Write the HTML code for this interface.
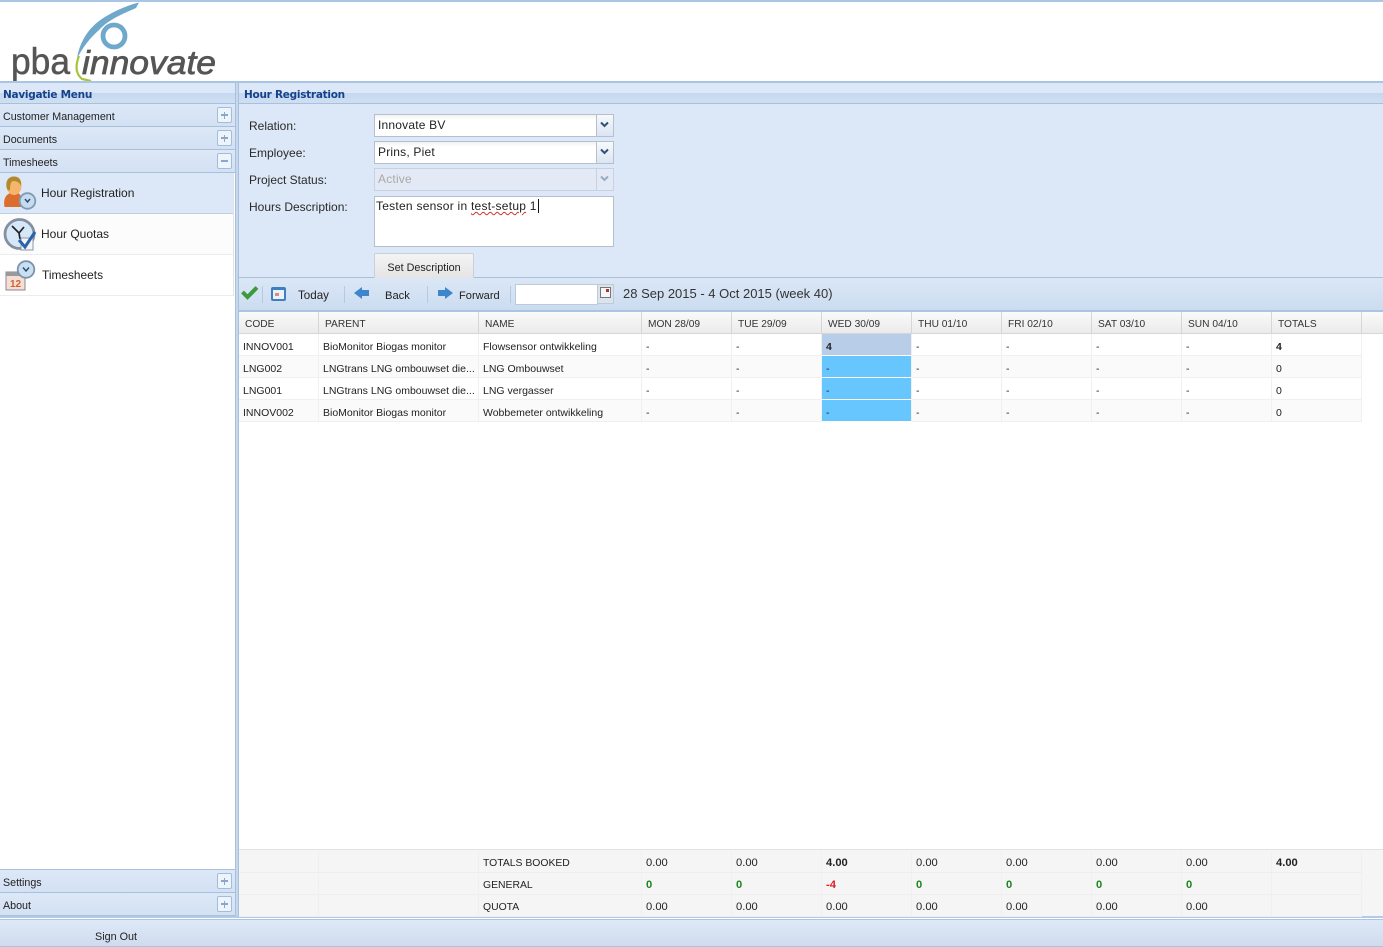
<!DOCTYPE html>
<html><head><meta charset="utf-8"><title>Hour Registration</title>
<style>
html,body{margin:0;padding:0;width:1383px;height:947px;overflow:hidden;background:#fff}
body{position:relative;font-family:"Liberation Sans",sans-serif;font-size:11px;color:#222}
.a{position:absolute}
.t{position:absolute;white-space:nowrap;line-height:14px}
.hd{background:linear-gradient(#dce8f7 0,#dce8f7 50%,#c5d8ef 50%,#cfdff3 100%);font-weight:bold;color:#15428b;font-family:"DejaVu Sans",sans-serif;font-size:10.5px;letter-spacing:-.27px}
.acc{position:absolute;left:0;width:235px;height:22px;background:linear-gradient(#dde8f7,#d3e1f4);border-bottom:1px solid #a9c0db;font-size:10.7px;line-height:26px;text-indent:3px;color:#222}
.pm{position:absolute;left:217px;top:3px;width:13px;height:14px;background:#eef4fc;border:1px solid #a5bcd9;border-radius:2px}
.pm:before{content:"";position:absolute;left:3px;top:6px;width:7px;height:1.500px;background:#8aa6cb}
.pm.p:after{content:"";position:absolute;left:5.750px;top:3.500px;width:1.500px;height:7px;background:#8aa6cb}
.lab{position:absolute;left:249px;font-size:12px;letter-spacing:0;color:#2a2a2a;line-height:14px}
.cb{position:absolute;left:374px;width:238px;height:21px;background:linear-gradient(#f2f2f2 0,#fff 5px);border:1px solid #b5c0cf;font-size:12px;letter-spacing:.2px;line-height:21px;text-indent:3px;color:#222}
.cb i{position:absolute;right:0;top:0;width:16px;height:21px;background:linear-gradient(#f7f9fc,#dbe5f2);border-left:1px solid #b5c0cf}
.cb svg{position:absolute;right:3px;top:6px}
.nav{position:absolute;left:0;width:233px;height:40px;border-bottom:1px solid #ececec;background:#fcfcfc}
.nav span{position:absolute;font-size:12px;line-height:14px;color:#222}
.sep{position:absolute;top:286px;width:1px;height:17px;background:#b6c9e0}
table{position:absolute;border-collapse:collapse;table-layout:fixed;left:239px;width:1122px;font-size:10.500px;color:#222}
td,th{padding:0 0 0 4px;overflow:hidden;white-space:nowrap;font-weight:normal;text-align:left;border-right:1px solid #f0f0f0}
td+td{padding-left:4.500px}
#head th{height:18px;padding-top:3px;padding-left:6px;background:linear-gradient(#fafafa,#ebebeb);border-right:1px solid #d6d6d6;border-bottom:1px solid #d6d6d6;font-size:10.200px;color:#333}
#head th+th{padding-left:6.500px}
#body td{height:17px;padding-top:4px;border-bottom:1px solid #f0f0f0}
#body tr:nth-child(even) td{background:#fafafa}
#body td.h{background:#66c6fd!important;border-bottom:1px solid #fff}
#body td.s{background:#b8cde8;font-weight:bold;border-bottom:1px solid #fff}
#foot{background:#f5f5f5}
#foot td{height:18px;padding-top:3px;line-height:17px;border-bottom:1px solid #eeeeee;background:#f5f5f5;font-size:11.200px}
#foot td.n{font-size:10.400px;line-height:17px}
b.g{color:#1d851d}b.r{color:#e01b24}
</style></head><body>

<div class="a" style="left:0;top:0;width:1383px;height:2px;background:#a9c5e4"></div>

<!-- logo -->
<svg class="a" style="left:0;top:0" width="230" height="82" viewBox="0 0 230 82">
<path d="M139 2.500L136 8C122 14 108 20 99 30C90 38 82 48 77 59C79 44 87 30 99 21C110 13 125 6 139 2.500Z" fill="#6ea8cb"/>
<circle cx="114" cy="36" r="11" fill="none" stroke="#6ea8cb" stroke-width="4.800"/>
<path d="M79 56C75 66 76 74 82 79L91 81" fill="none" stroke="#a8c43c" stroke-width="2.200"/>
<text x="11" y="74" font-family="'Liberation Sans',sans-serif" font-size="37" fill="#555" stroke="#555" stroke-width=".5" textLength="59" lengthAdjust="spacingAndGlyphs">pba</text>
<text x="82" y="74" font-family="'Liberation Sans',sans-serif" font-style="italic" font-size="33" fill="#555" stroke="#555" stroke-width=".7" textLength="134" lengthAdjust="spacingAndGlyphs">innovate</text>
</svg>

<!-- frame lines -->
<div class="a" style="left:0;top:81px;width:1383px;height:2px;background:#a9c5e4"></div>
<div class="a" style="left:235px;top:83px;width:4px;height:834px;background:#c5d8ee;border-left:1px solid #a9c0db;border-right:1px solid #a9c0db;box-sizing:border-box"></div>

<!-- left -->
<div class="a hd" style="left:0;top:83px;width:235px;height:20px;line-height:24px;text-indent:3px;border-bottom:1px solid #a9c0db">Navigatie Menu</div>
<div class="acc" style="top:104px">Customer Management<div class="pm p"></div></div>
<div class="acc" style="top:127px">Documents<div class="pm p"></div></div>
<div class="acc" style="top:150px">Timesheets<div class="pm"></div></div>
<div class="a" style="left:0;top:172px;width:235px;height:1px;background:#a9c0db"></div>

<div class="nav" style="top:173px;background:#dce7f7;border-bottom:1px solid #bccde4"><span style="left:41px;top:13px">Hour Registration</span></div>
<div class="nav" style="top:214px"><span style="left:41px;top:13px">Hour Quotas</span></div>
<div class="nav" style="top:255px;background:#fff"><span style="left:42px;top:13px;font-size:11.900px">Timesheets</span></div>
<div class="a" style="left:233px;top:173px;width:1px;height:123px;background:#e4e4e4"></div>

<svg class="a" style="left:3px;top:176px" width="34" height="34" viewBox="0 0 34 34">
<path d="M1.500 31C0 23 3 18 8 17L15 17C18 19 20 22 20 31Z" fill="#dd6d2c"/>
<ellipse cx="11" cy="10" rx="7.500" ry="9" fill="#f4b56c"/>
<path d="M3.500 11C2.500 3 7 .5 11 .5C16 .5 19 4 18 10C16.500 6 13 5 10.500 5C8 5 7 8 7 14C5 15 4 13 3.500 11Z" fill="#b3892b"/>
<circle cx="24.500" cy="25" r="7.800" fill="#c5dcf0" stroke="#7f9ab4" stroke-width="1.800"/>
<path d="M22 23L24.500 26L27 23" fill="none" stroke="#2a4a70" stroke-width="1.400"/>
</svg>
<svg class="a" style="left:3px;top:217px" width="34" height="36" viewBox="0 0 34 36">
<circle cx="16.500" cy="17" r="14.500" fill="#d6e8f7" stroke="#84909f" stroke-width="2.800"/>
<path d="M9 9L16 16L21 10M16 16L17 22" fill="none" stroke="#222" stroke-width="1.700"/>
<rect x="18" y="21" width="12" height="12" fill="#f3f5f7" stroke="#8d99a8"/>
<path d="M16 23L22 30L32 15" fill="none" stroke="#2a62ad" stroke-width="3"/>
</svg>
<svg class="a" style="left:4px;top:260px" width="32" height="31" viewBox="0 0 32 31">
<rect x="2" y="12" width="19" height="18" fill="#f4dfd8" stroke="#8a8a8a"/>
<rect x="2" y="12" width="19" height="4" fill="#9a9a9a"/>
<text x="6" y="27" font-family="'Liberation Sans',sans-serif" font-size="10" font-weight="bold" fill="#d8602c">12</text>
<circle cx="22" cy="9.500" r="8.300" fill="#c9dff2" stroke="#7f93a8" stroke-width="1.800"/>
<path d="M19 7.500L22 11L25 7.500" fill="none" stroke="#2a4a70" stroke-width="1.400"/>
</svg>

<div class="a" style="left:0;top:869px;width:235px;height:1px;background:#a9c0db"></div>
<div class="acc" style="top:870px">Settings<div class="pm p"></div></div>
<div class="acc" style="top:893px">About<div class="pm p"></div></div>
<div class="a" style="left:0;top:916px;width:1383px;height:2px;background:#b4cbe5"></div>
<div class="a" style="left:0;top:919px;width:1383px;height:1px;background:#a9c5e4"></div>

<div class="a" style="left:0;top:920px;width:1383px;height:26px;background:linear-gradient(#dee9f7,#cfdcef)"></div>
<div class="a" style="left:0;top:946px;width:1383px;height:1px;background:#a9c5e4"></div>
<div class="t" style="left:95px;top:930px;font-size:10.800px">Sign Out</div>

<!-- right -->
<div class="a hd" style="left:239px;top:83px;width:1144px;height:20px;line-height:24px;text-indent:5px;border-bottom:1px solid #a9c0db">Hour Registration</div>
<div class="a" style="left:239px;top:104px;width:1144px;height:173px;background:#dce7f7"></div>
<div class="a" style="left:239px;top:277px;width:1144px;height:1px;background:#a9c0db"></div>

<div class="lab" style="top:119px">Relation:</div>
<div class="cb" style="top:114px">Innovate BV<i><svg width="11" height="8"><path d="M2 1.500L5.500 5L9 1.500" fill="none" stroke="#334f75" stroke-width="2"/></svg></i></div>
<div class="lab" style="top:146px">Employee:</div>
<div class="cb" style="top:141px">Prins, Piet<i><svg width="11" height="8"><path d="M2 1.500L5.500 5L9 1.500" fill="none" stroke="#334f75" stroke-width="2"/></svg></i></div>
<div class="lab" style="top:173px">Project Status:</div>
<div class="cb" style="top:168px;background:#e3eaf5;color:#a9a9a9;border-color:#c7d1df">Active<i style="background:#e3eaf5;border-color:#c7d1df"><svg width="11" height="8"><path d="M2 1.500L5.500 5L9 1.500" fill="none" stroke="#9aabbf" stroke-width="2"/></svg></i></div>
<div class="lab" style="top:200px">Hours Description:</div>
<div class="a" style="left:374px;top:196px;width:238px;height:49px;background:#fff;border:1px solid #b5c0cf"></div>
<div class="t" style="left:376px;top:199px;font-size:12px;letter-spacing:.25px">Testen sensor in <span style="text-decoration:underline wavy #c33;text-decoration-thickness:1px">test-setup</span> 1</div>
<div class="a" style="left:538px;top:199px;width:1px;height:14px;background:#111"></div>
<div class="a" style="left:374px;top:253px;width:98px;height:24px;background:linear-gradient(#f4f4f4,#e4e4e4);border:1px solid #c8d0da;border-bottom:0;border-radius:2px 2px 0 0;text-align:center;line-height:29px;font-size:10.800px;color:#222">Set Description</div>

<!-- toolbar -->
<div class="a" style="left:239px;top:278px;width:1144px;height:33px;background:linear-gradient(#dbe7f6,#cbdcf0)"></div>
<div class="a" style="left:239px;top:310px;width:1144px;height:2px;background:#a9c5e4"></div>
<svg class="a" style="left:241px;top:285px" width="18" height="15"><path d="M1.500 7L6.500 12L16 2.500" fill="none" stroke="#3b9a3b" stroke-width="4"/></svg>
<div class="sep" style="left:262px"></div>
<div class="a" style="left:271px;top:287px;width:11px;height:9px;background:#eaf2fb;border:2px solid #3f7fc0;border-top-width:3px;border-radius:2px;box-sizing:content-box"></div>
<div class="a" style="left:275px;top:293px;width:4px;height:3px;background:#e08a7a"></div>
<div class="t" style="left:298px;top:289px;font-size:11.600px">Today</div>
<div class="sep" style="left:344px"></div>
<svg class="a" style="left:354px;top:286px" width="16" height="15"><path d="M0 7L8 1V4H15V10H8V13Z" fill="#3e86cc"/></svg>
<div class="t" style="left:385px;top:289px;font-size:11.200px">Back</div>
<div class="sep" style="left:427px"></div>
<svg class="a" style="left:437px;top:286px" width="16" height="15"><path d="M16 7L8 1V4H1V10H8V13Z" fill="#3e86cc"/></svg>
<div class="t" style="left:459px;top:289px;font-size:11.100px">Forward</div>
<div class="sep" style="left:510px"></div>
<div class="a" style="left:515px;top:284px;width:81px;height:19px;background:#fff;border:1px solid #bccadb"></div>
<div class="a" style="left:597px;top:284px;width:17px;height:20px;background:#dde3ea;border:1px solid #bccadb;box-sizing:border-box"></div>
<svg class="a" style="left:600px;top:287px" width="12" height="12"><rect x=".5" y=".5" width="10" height="10" fill="#f6f6f6" stroke="#777"/><rect x="6" y="2" width="3" height="3" fill="#a33"/></svg>
<div class="t" style="left:623px;top:287px;font-size:13px;color:#333">28 Sep 2015 - 4 Oct 2015 (week 40)</div>

<!-- grid header -->
<div class="a" style="left:1362px;top:312px;width:21px;height:21px;background:linear-gradient(#fafafa,#ebebeb);border-bottom:1px solid #d6d6d6"></div>
<table id="head" style="top:312px">
<colgroup><col style="width:79px"><col style="width:160px"><col style="width:163px"><col style="width:90px"><col style="width:90px"><col style="width:90px"><col style="width:90px"><col style="width:90px"><col style="width:90px"><col style="width:90px"><col style="width:90px"></colgroup>
<tr><th>CODE</th><th>PARENT</th><th>NAME</th><th>MON 28/09</th><th>TUE 29/09</th><th>WED 30/09</th><th>THU 01/10</th><th>FRI 02/10</th><th>SAT 03/10</th><th>SUN 04/10</th><th>TOTALS</th></tr>
</table>

<table id="body" style="top:334px">
<colgroup><col style="width:79px"><col style="width:160px"><col style="width:163px"><col style="width:90px"><col style="width:90px"><col style="width:90px"><col style="width:90px"><col style="width:90px"><col style="width:90px"><col style="width:90px"><col style="width:90px"></colgroup>
<tr><td>INNOV001</td><td>BioMonitor Biogas monitor</td><td>Flowsensor ontwikkeling</td><td>-</td><td>-</td><td class="s">4</td><td>-</td><td>-</td><td>-</td><td>-</td><td><b>4</b></td></tr>
<tr><td>LNG002</td><td>LNGtrans LNG ombouwset die...</td><td>LNG Ombouwset</td><td>-</td><td>-</td><td class="h">-</td><td>-</td><td>-</td><td>-</td><td>-</td><td>0</td></tr>
<tr><td>LNG001</td><td>LNGtrans LNG ombouwset die...</td><td>LNG vergasser</td><td>-</td><td>-</td><td class="h">-</td><td>-</td><td>-</td><td>-</td><td>-</td><td>0</td></tr>
<tr><td>INNOV002</td><td>BioMonitor Biogas monitor</td><td>Wobbemeter ontwikkeling</td><td>-</td><td>-</td><td class="h">-</td><td>-</td><td>-</td><td>-</td><td>-</td><td>0</td></tr>
</table>

<!-- footer -->
<div class="a" style="left:239px;top:849px;width:1144px;height:67px;background:#f5f5f5;border-top:1px solid #e2e2e2;box-sizing:border-box"></div>
<table id="foot" style="top:851px">
<colgroup><col style="width:79px"><col style="width:160px"><col style="width:163px"><col style="width:90px"><col style="width:90px"><col style="width:90px"><col style="width:90px"><col style="width:90px"><col style="width:90px"><col style="width:90px"><col style="width:90px"></colgroup>
<tr><td></td><td></td><td class="n">TOTALS BOOKED</td><td>0.00</td><td>0.00</td><td><b>4.00</b></td><td>0.00</td><td>0.00</td><td>0.00</td><td>0.00</td><td><b>4.00</b></td></tr>
<tr><td></td><td></td><td class="n">GENERAL</td><td><b class="g">0</b></td><td><b class="g">0</b></td><td><b class="r">-4</b></td><td><b class="g">0</b></td><td><b class="g">0</b></td><td><b class="g">0</b></td><td><b class="g">0</b></td><td></td></tr>
<tr><td></td><td></td><td class="n">QUOTA</td><td>0.00</td><td>0.00</td><td>0.00</td><td>0.00</td><td>0.00</td><td>0.00</td><td>0.00</td><td></td></tr>
</table>

</body></html>
